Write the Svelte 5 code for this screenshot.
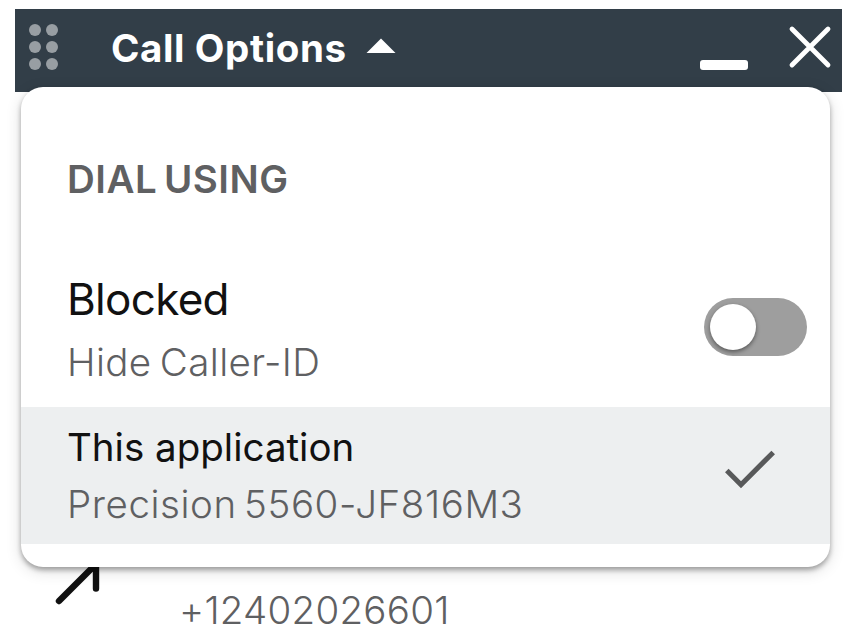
<script lang="ts">
  let blocked = $state(false);
  let minimized = $state(false);

  const dots = [0, 1, 2, 3, 4, 5];
  const device = { title: 'This application', name: 'Precision 5560-JF816M3' };
  const phone = '+12402026601';
</script>

<div class="widget">
  <header>
    <div class="grip">
      {#each dots as dot (dot)}
        <span></span>
      {/each}
    </div>
    <div class="title">Call Options</div>
    <svg class="caret" width="30" height="16" viewBox="0 0 30 16">
      <path d="M15 0.5 L29.5 15 H0.5 Z" fill="#fff" />
    </svg>
    <button class="minimize" aria-label="Minimize" onclick={() => (minimized = !minimized)}></button>
    <button class="close" aria-label="Close">
      <svg width="44" height="44" viewBox="0 0 44 44">
        <path d="M4 4 L40 40 M40 4 L4 40" stroke="#fff" stroke-width="4.8" stroke-linecap="round" />
      </svg>
    </button>
  </header>

  <div class="call">
    <svg width="60" height="60" viewBox="0 0 60 60">
      <path d="M7 53 L44 16 M14 14.5 H44 V40.5" fill="none" stroke="#111" stroke-width="6.4" stroke-linecap="round" />
    </svg>
    <div class="phone">{phone}</div>
  </div>

  {#if !minimized}
    <div class="menu">
      <h2>DIAL USING</h2>

      <div class="row">
        <div class="text">
          <div class="name large">Blocked</div>
          <div class="detail caller">Hide Caller-ID</div>
        </div>
        <button
          class="toggle"
          class:on={blocked}
          role="switch"
          aria-checked={blocked}
          aria-label="Blocked"
          onclick={() => (blocked = !blocked)}
        >
          <span class="knob"></span>
        </button>
      </div>

      <div class="row selected">
        <div class="text">
          <div class="name">{device.title}</div>
          <div class="detail device">{device.name}</div>
        </div>
        <svg class="check" width="50" height="40" viewBox="0 0 50 40">
          <path d="M1.8 20.4 L16 34.8 L48.2 2.4" fill="none" stroke="#58595a" stroke-width="5" />
        </svg>
      </div>
    </div>
  {/if}
</div>

<style>
  :global(body) {
    background: #fff;
  }

  .widget {
    position: relative;
    width: 827px;
    height: 623px;
    margin: 9px 0 0 15px;
    font-family: Inter, 'Liberation Sans', sans-serif;
    font-size: 38.5px;
    white-space: nowrap;
  }

  button {
    border: 0;
    padding: 0;
    background: none;
  }

  svg {
    display: block;
  }

  header {
    display: flex;
    align-items: center;
    box-sizing: border-box;
    height: 83px;
    padding: 0 10px 8px 14px;
    background: #323e48;
    color: #fff;
  }

  .grip {
    display: grid;
    grid-template-columns: 12px 12px;
    gap: 5px;
    width: 29px;
  }

  .grip span {
    height: 12px;
    border-radius: 50%;
    background: #989ea3;
  }

  .title {
    width: 237px;
    margin: 2px 0 0 53px;
    font-weight: 650;
    letter-spacing: 0.6px;
  }

  .caret {
    margin: -2px 0 0 18px;
  }

  .minimize {
    width: 48px;
    height: 10px;
    margin: 37px 0 0 auto;
    border-radius: 3px;
    background: #fff;
  }

  .close {
    margin-left: 40px;
  }

  .call {
    display: flex;
    margin-top: 456px;
  }

  .call svg {
    margin-left: 37px;
  }

  .phone {
    margin: 42px 0 0 67px;
    line-height: 40px;
    letter-spacing: 0.25px;
    color: #5f6062;
    font-weight: 300;
  }

  .menu {
    position: absolute;
    top: 78px;
    left: 6px;
    width: 809px;
    height: 480px;
    border-radius: 22px;
    background: #fff;
    box-shadow: 0 3px 5px rgba(0, 0, 0, 0.32), 0 4px 16px rgba(0, 0, 0, 0.14);
  }

  h2 {
    height: 92px;
    margin: 0;
    padding: 67px 0 0 46px;
    font-size: 38.5px;
    font-weight: 600;
    line-height: 50px;
    letter-spacing: 0.5px;
    word-spacing: -3.5px;
    color: #5f6062;
  }

  .row {
    display: flex;
    justify-content: space-between;
    align-items: center;
    box-sizing: border-box;
    height: 161px;
    padding: 0 23px 0 46px;
  }

  .selected {
    height: 137px;
    padding-right: 55px;
    background: #edeff0;
  }

  .text {
    line-height: 57px;
  }

  .name {
    color: #111;
    font-weight: 400;
  }

  .large {
    margin-top: 7px;
    font-size: 44px;
    line-height: 64px;
    letter-spacing: -0.7px;
  }

  .detail {
    color: #5f6062;
    font-weight: 300;
  }

  .caller {
    line-height: 62px;
    letter-spacing: 0.4px;
    word-spacing: -3px;
  }

  .device {
    letter-spacing: 0.57px;
    word-spacing: -4px;
  }

  .check {
    margin-top: -12px;
  }

  .toggle {
    box-sizing: border-box;
    width: 103px;
    height: 58px;
    padding: 6px;
    border-radius: 29px;
    background: #9e9e9e;
  }

  .toggle.on {
    background: #2e7d32;
  }

  .knob {
    display: block;
    width: 46px;
    height: 46px;
    border-radius: 50%;
    background: #fff;
    box-shadow: 0 2px 4px rgba(0, 0, 0, 0.45);
  }

  .on .knob {
    margin-left: auto;
  }
</style>
